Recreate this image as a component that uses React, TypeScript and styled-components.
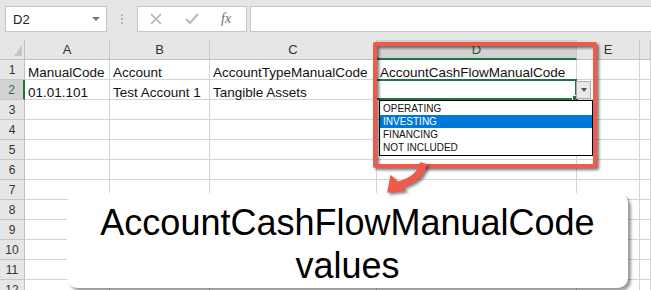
import React from "react";
import styled, { createGlobalStyle } from "styled-components";

const GlobalStyle = createGlobalStyle`
  html, body { margin: 0; padding: 0; background: #fff; }
  body {
    width: 651px;
    height: 290px;
    overflow: hidden;
    font-family: "Liberation Sans", Arial, sans-serif;
  }
`;

const RED = "#ef5a4b";
const GREEN = "#217346";

const Page = styled.div`
  position: relative;
  width: 651px;
  height: 290px;
  overflow: hidden;
  background: #fff;
`;

const Toolbar = styled.div`
  display: flex;
  align-items: flex-start;
  height: 40px;
  padding: 6px 0 0 5px;
  box-sizing: border-box;
  background: #e6e6e6;
`;

const NameBox = styled.div`
  display: flex;
  align-items: center;
  justify-content: space-between;
  width: 102px;
  height: 26px;
  box-sizing: border-box;
  padding: 0 6px 0 7px;
  background: #fff;
  border: 1px solid #c6c6c6;
  font-size: 13px;
  color: #222;
`;

const Caret = styled.span`
  width: 0;
  height: 0;
  border-left: 4px solid transparent;
  border-right: 4px solid transparent;
  border-top: 4px solid #777;
`;

const Grip = styled.div`
  display: flex;
  flex-direction: column;
  align-items: center;
  justify-content: center;
  gap: 2px;
  width: 30px;
  height: 26px;
  span {
    width: 2px;
    height: 2px;
    background: #b4b4b4;
  }
`;

const FxBox = styled.div`
  display: flex;
  align-items: center;
  width: 110px;
  height: 26px;
  box-sizing: border-box;
  padding-left: 12px;
  gap: 23px;
  background: #fff;
  border: 1px solid #c6c6c6;
`;

const Fx = styled.span`
  font-family: "Liberation Serif", "Times New Roman", serif;
  font-style: italic;
  font-size: 14px;
  color: #6e6e6e;
  margin-left: -1px;
`;

const FormulaInput = styled.div`
  flex: 1;
  height: 26px;
  margin-left: 3px;
  margin-right: -2px;
  box-sizing: border-box;
  background: #fff;
  border: 1px solid #c6c6c6;
`;

const Sheet = styled.div`
  display: grid;
  grid-template-columns: 25px 85px 100px 167px 200px 63px 1fr;
  grid-auto-rows: 20px;
`;

const Cell = styled.div`
  position: relative;
  display: flex;
  align-items: flex-end;
  box-sizing: border-box;
  padding-left: 3px;
  border-right: 1px solid #d4d4d4;
  border-bottom: 1px solid #d4d4d4;
  font-size: 13.5px;
  line-height: 13px;
  color: #111;
  white-space: nowrap;
`;

const ColHead = styled.div<{ $selected?: boolean }>`
  display: flex;
  align-items: center;
  justify-content: center;
  box-sizing: border-box;
  background: ${(p) => (p.$selected ? "#d2d2d2" : "#e6e6e6")};
  border-right: 1px solid #c8c8c8;
  border-bottom: ${(p) => (p.$selected ? `2px solid ${GREEN}` : "1px solid #c0c0c0")};
  font-size: 13px;
  color: ${(p) => (p.$selected ? "#1d5f3c" : "#333")};
`;

const Corner = styled.div`
  position: relative;
  box-sizing: border-box;
  background: #e6e6e6;
  border-right: 1px solid #c0c0c0;
  border-bottom: 1px solid #c0c0c0;
  &::after {
    content: "";
    position: absolute;
    right: 2px;
    bottom: 3px;
    width: 8px;
    height: 11px;
    background: #c4c4c4;
    clip-path: polygon(100% 0, 100% 100%, 0 100%);
  }
`;

const RowHead = styled.div<{ $selected?: boolean }>`
  display: flex;
  align-items: center;
  justify-content: center;
  box-sizing: border-box;
  background: ${(p) => (p.$selected ? "#d2d2d2" : "#e6e6e6")};
  border-right: ${(p) => (p.$selected ? `2px solid ${GREEN}` : "1px solid #c0c0c0")};
  border-bottom: 1px solid #c8c8c8;
  font-size: 12px;
  color: ${(p) => (p.$selected ? GREEN : "#333")};
`;

const ActiveCell = styled(Cell)`
  &::after {
    content: "";
    position: absolute;
    top: -1px;
    left: -2px;
    right: -1px;
    bottom: -1px;
    border: 2px solid ${GREEN};
    pointer-events: none;
  }
`;

const FillHandle = styled.span`
  position: absolute;
  right: -3px;
  bottom: -3px;
  width: 5px;
  height: 5px;
  background: ${GREEN};
  border: 1px solid #fff;
  z-index: 2;
`;

const DropButton = styled.div`
  position: absolute;
  left: 100%;
  top: 1px;
  width: 15px;
  height: 18px;
  box-sizing: border-box;
  display: flex;
  align-items: center;
  justify-content: center;
  background: #e8e8e8;
  border: 1px solid #ababab;
  z-index: 3;
`;

const DropCaret = styled.span`
  width: 0;
  height: 0;
  border-left: 3.5px solid transparent;
  border-right: 3.5px solid transparent;
  border-top: 4px solid #555;
`;

const List = styled.div`
  position: absolute;
  left: 2px;
  top: 20px;
  width: 214px;
  box-sizing: border-box;
  background: #fff;
  border: 1px solid #000;
  padding: 1px 0;
  z-index: 3;
`;

const Option = styled.div<{ $active?: boolean }>`
  height: 13px;
  line-height: 13px;
  padding-left: 3px;
  font-size: 10px;
  background: ${(p) => (p.$active ? "#0078d7" : "transparent")};
  color: ${(p) => (p.$active ? "#fff" : "#111")};
`;

const Highlight = styled.div`
  position: absolute;
  left: 373px;
  top: 42px;
  width: 224px;
  height: 126px;
  box-sizing: border-box;
  border: 4px solid ${RED};
  border-radius: 2px;
  filter: drop-shadow(2px 2px 1.5px rgba(0, 0, 0, 0.55));
  z-index: 5;
  pointer-events: none;
`;

const Arrow = styled.svg`
  position: absolute;
  left: 380px;
  top: 160px;
  width: 50px;
  height: 40px;
  overflow: visible;
  filter: drop-shadow(2px 2px 1.5px rgba(0, 0, 0, 0.5));
  z-index: 5;
`;

const Callout = styled.div`
  position: absolute;
  left: 67px;
  top: 193px;
  width: 561px;
  height: 95px;
  box-sizing: border-box;
  padding-top: 8px;
  background: #fff;
  border-radius: 10px;
  box-shadow: 3px 3px 3px rgba(0, 0, 0, 0.4);
  text-align: center;
  font-size: 36px;
  line-height: 43px;
  color: #000;
  z-index: 4;
`;

const columns = ["A", "B", "C", "D", "E", ""];
const rows: string[][] = [
  ["ManualCode", "Account", "AccountTypeManualCode", "AccountCashFlowManualCode", "", ""],
  ["01.01.101", "Test Account 1", "Tangible Assets", "", "", ""],
];
const options = ["OPERATING", "INVESTING", "FINANCING", "NOT INCLUDED"];

export default function App() {
  return (
    <Page>
      <GlobalStyle />
      <Toolbar>
        <NameBox>
          D2
          <Caret />
        </NameBox>
        <Grip>
          <span />
          <span />
          <span />
        </Grip>
        <FxBox>
          <svg width="12" height="12" viewBox="0 0 12 12">
            <path d="M1 1 L11 11 M11 1 L1 11" stroke="#b3b3b3" strokeWidth="1.6" />
          </svg>
          <svg width="14" height="12" viewBox="0 0 14 12">
            <path d="M1 6 L5 10 L13 1" stroke="#b8b8b8" strokeWidth="2" fill="none" />
          </svg>
          <Fx>fx</Fx>
        </FxBox>
        <FormulaInput />
      </Toolbar>

      <Sheet>
        <Corner />
        {columns.map((c, i) => (
          <ColHead key={i} $selected={c === "D"}>
            {c}
          </ColHead>
        ))}
        {Array.from({ length: 12 }, (_, r) => (
          <React.Fragment key={r}>
            <RowHead $selected={r === 1}>{r + 1}</RowHead>
            {columns.map((_, c) => {
              const value = rows[r]?.[c] ?? "";
              if (r === 1 && c === 3) {
                return (
                  <ActiveCell key={c}>
                    <FillHandle />
                    <DropButton>
                      <DropCaret />
                    </DropButton>
                    <List>
                      {options.map((o) => (
                        <Option key={o} $active={o === "INVESTING"}>
                          {o}
                        </Option>
                      ))}
                    </List>
                  </ActiveCell>
                );
              }
              return <Cell key={c}>{value}</Cell>;
            })}
          </React.Fragment>
        ))}
      </Sheet>

      <Highlight />
      <Arrow viewBox="0 0 50 40">
        <path d="M40 2 L47 4 Q44 22 20 28 L16 22 Q37 17 40 2 Z" fill={RED} />
        <path d="M8 32 L11 16 L25 30 Z" fill={RED} strokeLinejoin="round" stroke={RED} strokeWidth="1.5" />
      </Arrow>

      <Callout>
        AccountCashFlowManualCode
        <br />
        values
      </Callout>
    </Page>
  );
}
